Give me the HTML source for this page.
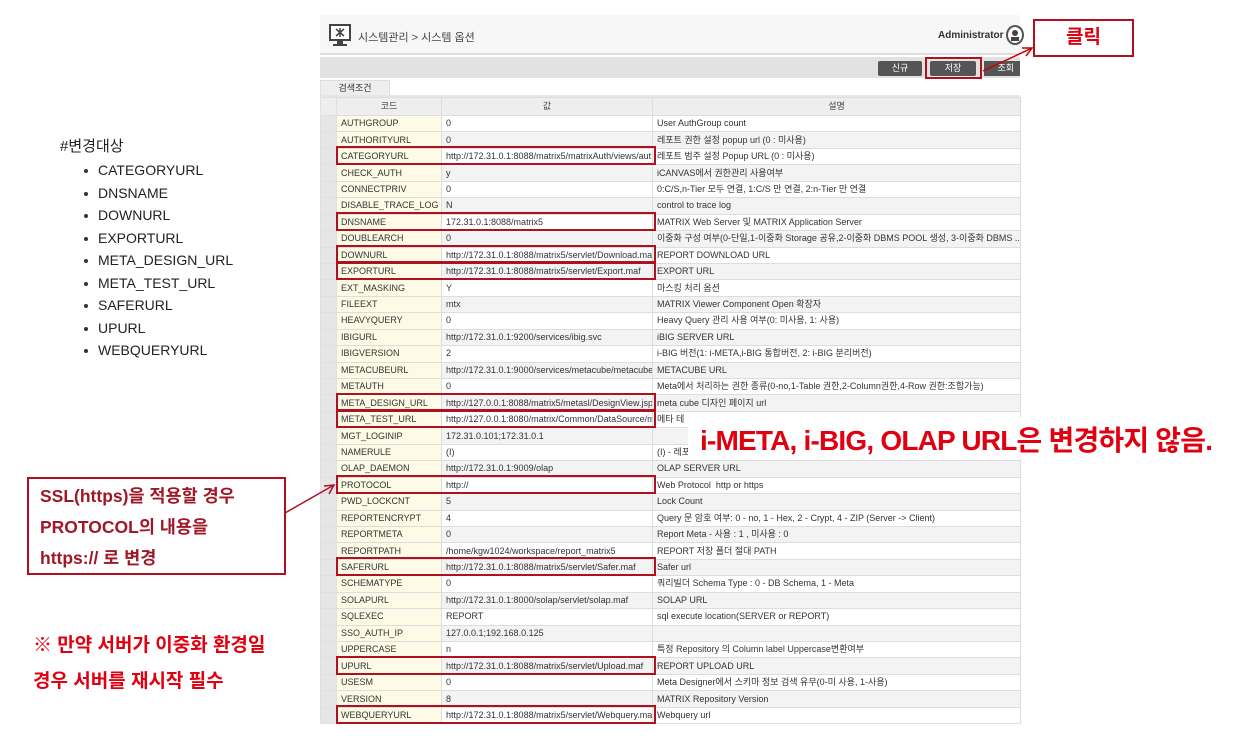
<!DOCTYPE html>
<html><head><meta charset="utf-8"><style>
*{margin:0;padding:0;box-sizing:border-box}
body{width:1243px;height:736px;background:#fff;position:relative;overflow:hidden;font-family:"Liberation Sans","Noto Sans CJK KR",sans-serif}
.abs{position:absolute}
table{position:absolute;left:320px;top:97px;width:700px;border-collapse:collapse;table-layout:fixed;font-size:9px;color:#333}
td{height:16.44px;border:1px solid #ddd;padding:0 4px;white-space:nowrap;overflow:hidden;text-overflow:clip;line-height:15px}
tr.h td{height:18px;background:#eee;text-align:center;color:#444}
td.g{background:#e6e6e6;border-color:#e0e0e0}
td.c{background:#fdfbe6}
tr:nth-child(odd):not(.h) td.v,tr:nth-child(odd):not(.h) td.d{background:#f3f3f3}
.rb{position:absolute;left:336px;width:320px;height:19px;border:2px solid #b01020}
ul{list-style:none}
li{font-size:14px;color:#222;height:22.5px;position:relative;padding-left:38px}
li:before{content:"";position:absolute;left:24px;top:7px;width:4px;height:4px;background:#333;border-radius:50%}
</style></head><body>
<div class="abs" style="left:320px;top:15px;width:700px;height:40px;background:#f7f7f7;border-bottom:2px solid #ddd"></div>
<svg class="abs" style="left:329px;top:24px" width="24" height="24" viewBox="0 0 24 24"><rect x="1" y="1" width="20" height="15" fill="#fff" stroke="#444" stroke-width="2"/><rect x="8" y="16" width="6" height="4" fill="#444"/><rect x="4" y="20" width="14" height="2" fill="#444"/><path d="M7 5l8 7M15 5l-8 7M11 4v9" stroke="#444" stroke-width="1.5"/></svg>
<div class="abs" style="left:358px;top:29px;font-size:11px;color:#444">시스템관리 &gt; 시스템 옵션</div>
<div class="abs" style="left:938px;top:30px;font-size:10px;color:#333;font-weight:bold">Administrator</div>
<div class="abs" style="left:1006px;top:25px;width:18px;height:20px;border:2px solid #555;border-radius:50%;background:#fff"></div>
<div class="abs" style="left:1012px;top:30px;width:6px;height:6px;background:#444;border-radius:50%"></div>
<div class="abs" style="left:1011px;top:37px;width:8px;height:4px;background:#444"></div>
<div class="abs" style="left:320px;top:57px;width:700px;height:21px;background:#e2e2e2"></div>
<div class="abs" style="left:878px;top:61px;width:44px;height:15px;background:#555;border-radius:2px;color:#fff;font-size:9px;text-align:center;line-height:15px">신규</div>
<div class="abs" style="left:930px;top:61px;width:46px;height:15px;background:#555;border-radius:2px;color:#fff;font-size:9px;text-align:center;line-height:15px">저장</div>
<div class="abs" style="left:984px;top:61px;width:36px;height:15px;background:#555;color:#fff;font-size:9px;text-align:right;padding-right:6px;line-height:15px">조회</div>
<div class="abs" style="left:925px;top:57px;width:57px;height:22px;border:2px solid #b01020"></div>
<div class="abs" style="left:320px;top:80px;width:70px;height:16px;background:#eee;border:1px solid #ddd;font-size:9px;text-align:center;line-height:14px;color:#333">검색조건</div>
<div class="abs" style="left:320px;top:95px;width:700px;height:2px;background:#e6e6e6"></div>
<table>
<colgroup><col style="width:16px"><col style="width:105px"><col style="width:211px"><col style="width:368px"></colgroup>
<tr class="h"><td class="g"></td><td>코드</td><td>값</td><td>설명</td></tr>
<tr><td class="g"></td><td class="c">AUTHGROUP</td><td class="v">0</td><td class="d">User AuthGroup count</td></tr>
<tr><td class="g"></td><td class="c">AUTHORITYURL</td><td class="v">0</td><td class="d">레포트 권한 설정 popup url (0 : 미사용)</td></tr>
<tr><td class="g"></td><td class="c">CATEGORYURL</td><td class="v">http://172.31.0.1:8088/matrix5/matrixAuth/views/aut...</td><td class="d">레포트 범주 설정 Popup URL (0 : 미사용)</td></tr>
<tr><td class="g"></td><td class="c">CHECK_AUTH</td><td class="v">y</td><td class="d">iCANVAS에서 권한관리 사용여부</td></tr>
<tr><td class="g"></td><td class="c">CONNECTPRIV</td><td class="v">0</td><td class="d">0:C/S,n-Tier 모두 연결, 1:C/S 만 연결, 2:n-Tier 만 연결</td></tr>
<tr><td class="g"></td><td class="c">DISABLE_TRACE_LOG</td><td class="v">N</td><td class="d">control to trace log</td></tr>
<tr><td class="g"></td><td class="c">DNSNAME</td><td class="v">172.31.0.1:8088/matrix5</td><td class="d">MATRIX Web Server 및 MATRIX Application Server</td></tr>
<tr><td class="g"></td><td class="c">DOUBLEARCH</td><td class="v">0</td><td class="d">이중화 구성 여부(0-단일,1-이중화 Storage 공유,2-이중화 DBMS POOL 생성, 3-이중화 DBMS ...</td></tr>
<tr><td class="g"></td><td class="c">DOWNURL</td><td class="v">http://172.31.0.1:8088/matrix5/servlet/Download.maf</td><td class="d">REPORT DOWNLOAD URL</td></tr>
<tr><td class="g"></td><td class="c">EXPORTURL</td><td class="v">http://172.31.0.1:8088/matrix5/servlet/Export.maf</td><td class="d">EXPORT URL</td></tr>
<tr><td class="g"></td><td class="c">EXT_MASKING</td><td class="v">Y</td><td class="d">마스킹 처리 옵션</td></tr>
<tr><td class="g"></td><td class="c">FILEEXT</td><td class="v">mtx</td><td class="d">MATRIX Viewer Component Open 확장자</td></tr>
<tr><td class="g"></td><td class="c">HEAVYQUERY</td><td class="v">0</td><td class="d">Heavy Query 관리 사용 여부(0: 미사용, 1: 사용)</td></tr>
<tr><td class="g"></td><td class="c">IBIGURL</td><td class="v">http://172.31.0.1:9200/services/ibig.svc</td><td class="d">iBIG SERVER URL</td></tr>
<tr><td class="g"></td><td class="c">IBIGVERSION</td><td class="v">2</td><td class="d">i-BIG 버전(1: i-META,i-BIG 통합버전, 2: i-BIG 분리버전)</td></tr>
<tr><td class="g"></td><td class="c">METACUBEURL</td><td class="v">http://172.31.0.1:9000/services/metacube/metacube...</td><td class="d">METACUBE URL</td></tr>
<tr><td class="g"></td><td class="c">METAUTH</td><td class="v">0</td><td class="d">Meta에서 처리하는 권한 종류(0-no,1-Table 권한,2-Column권한,4-Row 권한:조합가능)</td></tr>
<tr><td class="g"></td><td class="c">META_DESIGN_URL</td><td class="v">http://127.0.0.1:8088/matrix5/metasl/DesignView.jsp</td><td class="d">meta cube 디자인 페이지 url</td></tr>
<tr><td class="g"></td><td class="c">META_TEST_URL</td><td class="v">http://127.0.0.1:8080/matrix/Common/DataSource/m...</td><td class="d">메타 테</td></tr>
<tr><td class="g"></td><td class="c">MGT_LOGINIP</td><td class="v">172.31.0.101;172.31.0.1</td><td class="d"></td></tr>
<tr><td class="g"></td><td class="c">NAMERULE</td><td class="v">(I)</td><td class="d">(I) - 레포트 명에 입력한 내용, (U) - 사용자 Code, (S) - Select box 값 Select box item1...</td></tr>
<tr><td class="g"></td><td class="c">OLAP_DAEMON</td><td class="v">http://172.31.0.1:9009/olap</td><td class="d">OLAP SERVER URL</td></tr>
<tr><td class="g"></td><td class="c">PROTOCOL</td><td class="v">http://</td><td class="d">Web Protocol &nbsp;http or https</td></tr>
<tr><td class="g"></td><td class="c">PWD_LOCKCNT</td><td class="v">5</td><td class="d">Lock Count</td></tr>
<tr><td class="g"></td><td class="c">REPORTENCRYPT</td><td class="v">4</td><td class="d">Query 문 암호 여부: 0 - no, 1 - Hex, 2 - Crypt, 4 - ZIP (Server -&gt; Client)</td></tr>
<tr><td class="g"></td><td class="c">REPORTMETA</td><td class="v">0</td><td class="d">Report Meta - 사용 : 1 , 미사용 : 0</td></tr>
<tr><td class="g"></td><td class="c">REPORTPATH</td><td class="v">/home/kgw1024/workspace/report_matrix5</td><td class="d">REPORT 저장 폴더 절대 PATH</td></tr>
<tr><td class="g"></td><td class="c">SAFERURL</td><td class="v">http://172.31.0.1:8088/matrix5/servlet/Safer.maf</td><td class="d">Safer url</td></tr>
<tr><td class="g"></td><td class="c">SCHEMATYPE</td><td class="v">0</td><td class="d">쿼리빌더 Schema Type : 0 - DB Schema, 1 - Meta</td></tr>
<tr><td class="g"></td><td class="c">SOLAPURL</td><td class="v">http://172.31.0.1:8000/solap/servlet/solap.maf</td><td class="d">SOLAP URL</td></tr>
<tr><td class="g"></td><td class="c">SQLEXEC</td><td class="v">REPORT</td><td class="d">sql execute location(SERVER or REPORT)</td></tr>
<tr><td class="g"></td><td class="c">SSO_AUTH_IP</td><td class="v">127.0.0.1;192.168.0.125</td><td class="d"></td></tr>
<tr><td class="g"></td><td class="c">UPPERCASE</td><td class="v">n</td><td class="d">특정 Repository 의 Column label Uppercase변환여부</td></tr>
<tr><td class="g"></td><td class="c">UPURL</td><td class="v">http://172.31.0.1:8088/matrix5/servlet/Upload.maf</td><td class="d">REPORT UPLOAD URL</td></tr>
<tr><td class="g"></td><td class="c">USESM</td><td class="v">0</td><td class="d">Meta Designer에서 스키마 정보 검색 유무(0-미 사용, 1-사용)</td></tr>
<tr><td class="g"></td><td class="c">VERSION</td><td class="v">8</td><td class="d">MATRIX Repository Version</td></tr>
<tr><td class="g"></td><td class="c">WEBQUERYURL</td><td class="v">http://172.31.0.1:8088/matrix5/servlet/Webquery.maf</td><td class="d">Webquery url</td></tr>
</table>
<div class="rb" style="top:146px"></div>
<div class="rb" style="top:211.5px"></div>
<div class="rb" style="top:244.5px"></div>
<div class="rb" style="top:261px"></div>
<div class="rb" style="top:392.5px"></div>
<div class="rb" style="top:409px"></div>
<div class="rb" style="top:474.7px"></div>
<div class="rb" style="top:557px"></div>
<div class="rb" style="top:655.5px"></div>
<div class="rb" style="top:705px"></div>
<div class="abs" style="left:688px;top:417px;width:555px;height:42px;background:#fff"></div>
<div class="abs" style="left:700px;top:419px;font-size:28px;font-weight:bold;color:#e00010;white-space:nowrap;letter-spacing:-0.8px">i-META, i-BIG, OLAP URL은 변경하지 않음.</div>
<div class="abs" style="left:1033px;top:19px;width:101px;height:38px;border:2px solid #b01020;background:#fff;color:#e00010;font-size:19px;font-weight:bold;text-align:center;line-height:34px">클릭</div>
<svg class="abs" style="left:0;top:0" width="1243" height="736"><path d="M983 71L1032 48" stroke="#c00" stroke-width="1.5"/><path d="M1022 48l10 0-6 8" fill="none" stroke="#c00" stroke-width="1.5"/><path d="M285 513L334 485" stroke="#b01020" stroke-width="1.5"/><path d="M324 486l10-1-5 9" fill="none" stroke="#b01020" stroke-width="1.5"/></svg>
<div class="abs" style="left:60px;top:135px;font-size:15px;color:#222">#변경대상</div>
<ul class="abs" style="left:60px;top:162px">
<li>CATEGORYURL</li><li>DNSNAME</li><li>DOWNURL</li><li>EXPORTURL</li><li>META_DESIGN_URL</li><li>META_TEST_URL</li><li>SAFERURL</li><li>UPURL</li><li>WEBQUERYURL</li></ul>
<div class="abs" style="left:27px;top:477px;width:259px;height:98px;border:2px solid #b01020;color:#a01828;font-weight:bold;font-size:17.5px;padding:2px 0 0 11px;line-height:31px;white-space:nowrap">SSL(https)을 적용할 경우<br>PROTOCOL의 내용을<br>https:// 로 변경</div>
<div class="abs" style="left:33px;top:628px;color:#e00010;font-weight:bold;font-size:19px;line-height:36px;white-space:nowrap">※ 만약 서버가 이중화 환경일<br>경우 서버를 재시작 필수</div>
</body></html>
